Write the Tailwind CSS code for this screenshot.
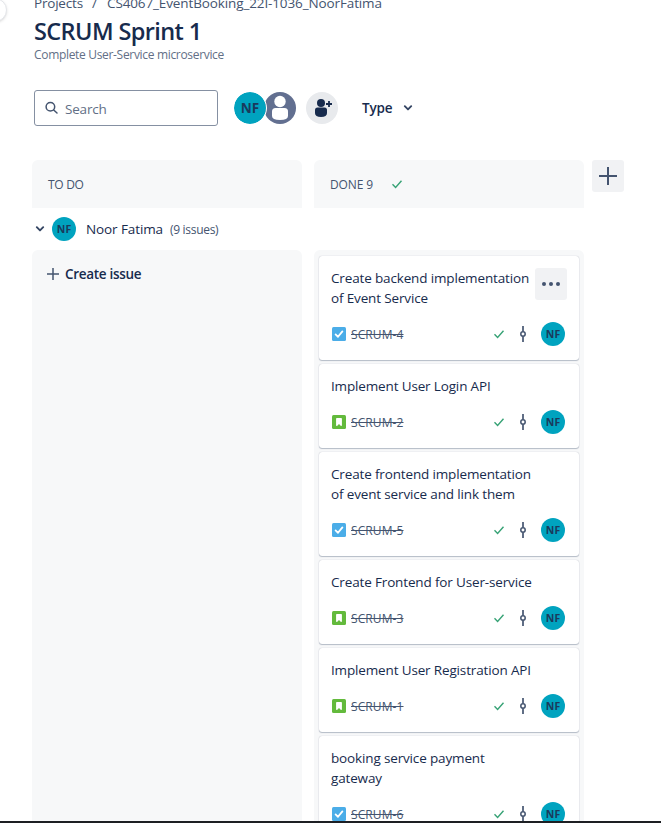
<!DOCTYPE html>
<html lang="en">
<head>
<meta charset="utf-8">
<title>SCRUM Sprint 1</title>
<script src="https://cdn.jsdelivr.net/npm/@tailwindcss/browser@4"></script>
</head>
<body class="bg-white">
<svg class="hidden">
  <symbol id="check" viewBox="0 0 12 12"><path d="M1.5 6.3 4.6 9.4 10.5 2.8" fill="none" stroke="#36a275" stroke-width="1.4"/></symbol>
  <symbol id="commit" viewBox="0 0 10 16"><path d="M5 0V5.5M5 10.5V16" stroke="#505f79" stroke-width="1.8"/><circle cx="5" cy="8" r="2.2" fill="none" stroke="#44546f" stroke-width="1.5"/></symbol>
  <symbol id="task" viewBox="0 0 14 14"><rect width="14" height="14" rx="1.5" fill="#4bade8"/><path d="M3.6 7.4 6 9.8 10.4 4.4" fill="none" stroke="#fff" stroke-width="1.8" stroke-linecap="round" stroke-linejoin="round"/></symbol>
  <symbol id="story" viewBox="0 0 14 14"><rect width="14" height="14" rx="1.5" fill="#63ba3c"/><path d="M4.8 3.7H9.2V10.2L7 8.1 4.8 10.2Z" fill="#fff" stroke="#fff" stroke-width="1.4" stroke-linejoin="round"/></symbol>
  <symbol id="chevron" viewBox="0 0 10 8"><path d="M1.8 2.2 5 5.4 8.2 2.2" fill="none" stroke="currentColor" stroke-width="1.9" stroke-linecap="round" stroke-linejoin="round"/></symbol>
</svg>
<div class="relative h-[823px] w-[661px] overflow-hidden bg-white font-['Open_Sans','Noto_Sans',sans-serif] text-[#172b4d]">
  <div class="absolute -left-[17px] -top-[2px] h-6 w-6 rounded-full border border-[#e4e6ea] bg-white shadow-sm"></div>
  <div class="flex h-full flex-col pl-8">
    <header class="h-[90px] pl-[2px]">
      <nav class="-mt-[7px] flex h-5 items-center gap-2 whitespace-nowrap text-[13.5px] leading-5 text-[#44546f]">
        <span class="w-[49px] tracking-[-0.2px]">Projects</span><span class="w-[8px] pl-px">/</span><span class="tracking-[-0.12px]">CS4067_EventBooking_22I-1036_NoorFatima</span>
      </nav>
      <h1 class="mt-[4px] h-7 whitespace-nowrap text-[23.5px] font-semibold leading-7 tracking-[-0.6px]">SCRUM Sprint 1</h1>
      <p class="mt-[2px] text-[12px] leading-4 tracking-[-0.32px] text-[#626f86]">Complete User-Service microservice</p>
    </header>
    <div class="flex h-9 items-center pl-[2px]">
      <div class="flex h-9 w-[184px] items-center rounded-[3px] border border-[#8590a2] pl-[9px]">
        <svg class="h-4 w-4" viewBox="0 0 16 16" fill="none" stroke="#44546f" stroke-width="1.5" stroke-linecap="round"><circle cx="6.4" cy="6.7" r="4.3"/><path d="M9.7 10 13 13"/></svg>
        <span class="ml-[5px] pt-[2px] text-[13.5px] tracking-[-0.2px] text-[#626f86]">Search</span>
      </div>
      <div class="relative z-10 ml-4 flex h-8 w-8 items-center justify-center rounded-full bg-[#00a3bf] text-[13.5px] font-bold text-[#1a3a5c] outline-1 outline-white">NF</div>
      <svg class="-ml-[2px] h-8 w-8" viewBox="0 0 32 32"><circle cx="16" cy="16" r="16" fill="#626f90"/><circle cx="16" cy="9.5" r="5.7" fill="#fff"/><path d="M8 19.5Q8 16 11.500 16H20.500Q24 16 24 19.500V24Q24 28 16 28T8 24Z" fill="#fff"/></svg>
      <svg class="ml-[10px] h-8 w-8" viewBox="0 0 32 32"><circle cx="16" cy="16" r="16" fill="#e8eaed"/><g fill="#172b4d"><circle cx="15" cy="11" r="4"/><path d="M9 18Q9 15.500 11.500 15.500H18.500Q21 15.500 21 18V21Q21 25 15 25T9 21Z"/></g><path d="M20 12H26M23 9V15" stroke="#172b4d" stroke-width="1.8"/></svg>
      <span class="ml-6 w-[30px] text-[13.5px] font-semibold tracking-[-0.2px]">Type</span>
      <svg class="ml-[11px] h-2 w-[10px] text-[#344563]"><use href="#chevron"/></svg>
    </div>
    <div class="mt-[34px] flex gap-3 text-[12px] font-normal text-[#44546f]">
      <div class="flex h-12 w-[270px] items-center rounded-t-md bg-[#f7f8f9] pl-4 pt-[2px] tracking-[-0.3px]">TO DO</div>
      <div class="flex h-12 w-[270px] items-center rounded-t-md bg-[#f7f8f9] pl-4 tracking-[-0.1px]"><span class="w-[61px] pt-[2px]">DONE 9</span><svg class="h-3 w-3"><use href="#check"/></svg></div>
      <div class="-ml-1 flex h-8 w-8 items-center justify-center rounded-[3px] bg-[#f1f2f4]"><svg class="h-5 w-5" viewBox="0 0 20 20"><path d="M10 1V19M1 10H19" stroke="#44546f" stroke-width="2"/></svg></div>
    </div>
    <div class="flex h-[42px] items-center pl-[3px]">
      <svg class="h-2 w-[10px] text-[#344563]"><use href="#chevron"/></svg>
      <div class="ml-[7px] flex h-6 w-6 items-center justify-center rounded-full bg-[#00a3bf] pt-px text-[10.5px] font-bold text-[#1a3a5c]">NF</div>
      <span class="ml-[10px] w-[84px] whitespace-nowrap text-[13.5px] tracking-[-0.1px]">Noor Fatima</span>
      <span class="pt-[2px] text-[12px] tracking-[-0.3px] text-[#44546f]">(9 issues)</span>
    </div>
    <main class="flex min-h-0 flex-1 gap-3">
      <section class="w-[270px] rounded-t-md bg-[#f7f8f9]">
        <div class="flex h-12 items-center pl-[15px]"><svg class="h-3 w-3" viewBox="0 0 12 12"><path d="M6 0V12M0 6H12" stroke="#44546f" stroke-width="1.5"/></svg><span class="ml-[6px] text-[13.5px] font-semibold tracking-[-0.3px]">Create issue</span></div>
      </section>
      <section id="done" class="flex w-[270px] flex-col gap-1 overflow-hidden rounded-t-md bg-[#f7f8f9] px-[5px] pt-[6px]"></section>
    </main>
  </div>
  <div class="absolute inset-x-0 bottom-0 h-[2px] bg-[#1d1f23]"></div>
</div>
<script>
const cards = [
  [["Create backend implementation", "of Event Service"], "task", 4, true],
  [["Implement User Login API"], "story", 2],
  [["Create frontend implementation", "of event service and link them"], "task", 5],
  [["Create Frontend for User-service"], "story", 3],
  [["Implement User Registration API"], "story", 1],
  [["booking service payment", "gateway"], "task", 6]
];
document.getElementById("done").innerHTML = cards.map(([lines, type, n, menu]) => `
  <article class="relative shrink-0 rounded-[3px] bg-white px-3 pt-3 pb-[14px] shadow-[0_1px_1px_#091e4240,0_0_1px_#091e424f]">
    <div class="whitespace-nowrap text-[13.5px] leading-5 tracking-[-0.15px]">${lines.map(l => `<div>${l}</div>`).join("")}</div>
    <div class="mt-[14px] flex h-6 items-center">
      <svg class="ml-[1px] h-[14px] w-[14px]"><use href="#${type}"/></svg>
      <span class="ml-[5px] pt-px text-[12px] tracking-[0.1px] text-[#44546f] line-through">SCRUM-${n}</span>
      <svg class="ml-auto h-3 w-3"><use href="#check"/></svg>
      <svg class="ml-[13px] h-4 w-[10px]"><use href="#commit"/></svg>
      <div class="ml-[13px] mr-[2px] flex h-6 w-6 items-center justify-center rounded-full bg-[#00a3bf] pt-px text-[10.5px] font-bold text-[#1a3a5c]">NF</div>
    </div>
    ${menu ? `<div class="absolute right-3 top-3 flex h-8 w-8 items-center justify-center gap-[3px] rounded-[3px] bg-[#f1f2f4]"><i class="h-1 w-1 rounded-full bg-[#44546f]"></i><i class="h-1 w-1 rounded-full bg-[#44546f]"></i><i class="h-1 w-1 rounded-full bg-[#44546f]"></i></div>` : ""}
  </article>`).join("");
</script>
</body>
</html>
